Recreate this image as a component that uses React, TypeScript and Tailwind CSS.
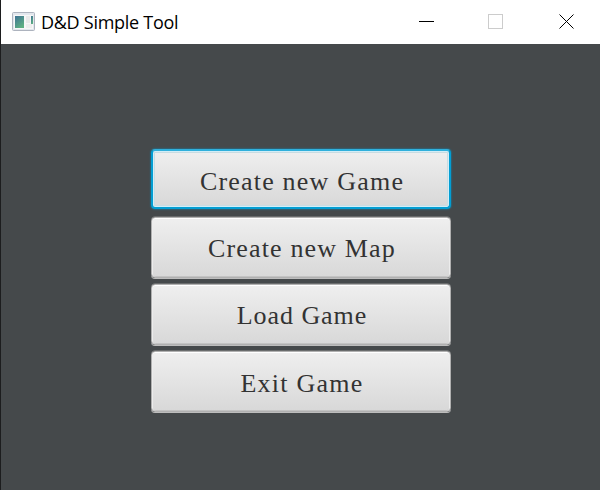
const buttons = [
  { label: "Create new Game", text: "pt-[6px] tracking-[1.2px]", focused: true },
  { label: "Create new Map", text: "pt-[3px] tracking-[1.15px]", focused: false },
  { label: "Load Game", text: "pt-[3px] tracking-[0.95px]", focused: false },
  { label: "Exit Game", text: "pt-[5px] tracking-[1.25px]", focused: false },
];

const focusedFrame =
  "mb-[2px] h-[60px] border-2 border-[#039ed3] border-t-[#2fb0dc] shadow-[0_0_2px_#039ed3,inset_0_0_0_1px_#d3edf6,inset_0_0_0_2px_#c8dce2]";
const plainFrame =
  "h-[61px] border border-[#b0b0b0] shadow-[0_-0.5px_0_#8e8e8e,0_1px_0_#bdbdbd,inset_0_1px_0_#fff,inset_1px_0_0_#ececec,inset_-1px_0_0_#ececec,inset_0_-1px_0_#c3c3c3]";

function AppIcon() {
  return (
    <svg width="24" height="20" viewBox="0 0 24 20">
      <defs>
        <linearGradient id="pane" x1="0" y1="0" x2="0.6" y2="1">
          <stop offset="0" stopColor="#3f7295" />
          <stop offset="1" stopColor="#5eb082" />
        </linearGradient>
      </defs>
      <rect x="0.5" y="0.5" width="22" height="18" rx="1" fill="#e3e7ed" stroke="#adb3be" />
      <rect x="2" y="3" width="19" height="14" fill="#f7f7f7" />
      <rect x="3" y="4" width="9" height="12" fill="url(#pane)" />
      <rect x="14" y="4" width="4" height="7" fill="#e9e9e9" />
      <rect x="14" y="12" width="6" height="4" fill="#eeeeee" />
      <rect x="19" y="4" width="2" height="8" fill="url(#pane)" />
    </svg>
  );
}

export default function App() {
  return (
    <div className="flex h-[490px] w-[600px] flex-col border-l border-[#1c1d1e] bg-[#45494b]">
      <header className="flex h-11 items-center bg-white pr-[25px] pl-[11px]">
        <AppIcon />
        <h1 className="ml-[5px] whitespace-nowrap font-['Open_Sans',sans-serif] text-[18px] leading-6 tracking-[-0.28px] text-black">
          D&amp;D Simple Tool
        </h1>
        <svg className="ml-auto" width="156" height="16" viewBox="0 0 156 16" fill="none">
          <path d="M0 7.5H15" stroke="#000" />
          <rect x="69.5" y="0.5" width="14" height="14" stroke="#ccc" />
          <path d="M140.5 0.5L154.5 14.5M154.5 0.5L140.5 14.5" stroke="#000" />
        </svg>
      </header>
      <main className="flex flex-col items-center gap-[6px] pt-[105px]">
        {buttons.map((b) => (
          <button
            key={b.label}
            className={`flex w-[300px] items-center justify-center whitespace-nowrap rounded-[4px] bg-linear-to-b from-[#efefef] to-[#d8d8d8] pl-[3px] font-['Liberation_Serif',serif] text-[26px] leading-8 text-[#333] ${b.text} ${b.focused ? focusedFrame : plainFrame}`}
          >
            {b.label}
          </button>
        ))}
      </main>
    </div>
  );
}
